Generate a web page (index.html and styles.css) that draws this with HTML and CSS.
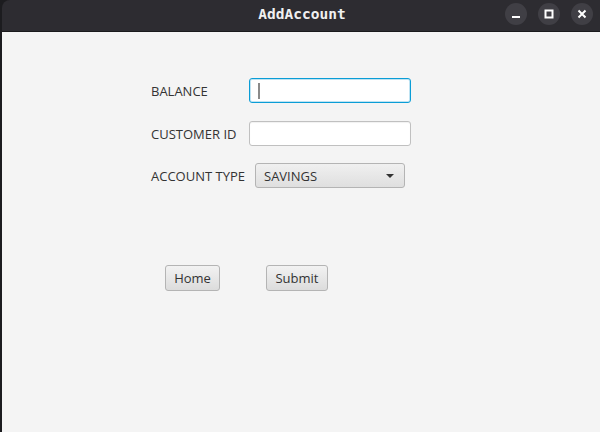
FILE: index.html
```html
<!DOCTYPE html>
<html>
<head>
<meta charset="utf-8">
<link rel="stylesheet" href="styles.css">
</head>
<body>
<div class="window">
  <div class="titlebar">
    <div class="title">AddAccount</div>
    <div class="controls">
      <div class="ctl"><svg width="10" height="10" viewBox="0 0 10 10"><rect x="1" y="7" width="8" height="2" fill="#fff"/></svg></div>
      <div class="ctl"><svg width="10" height="10" viewBox="0 0 10 10"><rect x="1.5" y="1.5" width="7" height="7" fill="none" stroke="#fff" stroke-width="2"/></svg></div>
      <div class="ctl"><svg width="10" height="10" viewBox="0 0 10 10"><path d="M1.5 1.5 L8.5 8.5 M8.5 1.5 L1.5 8.5" stroke="#fff" stroke-width="2"/></svg></div>
    </div>
  </div>
  <div class="content">
    <div class="form">
      <label class="lbl">BALANCE</label>
      <div class="field focused"><span class="caret"></span></div>
      <label class="lbl">CUSTOMER ID</label>
      <div class="field"></div>
      <label class="lbl up">ACCOUNT TYPE</label>
      <div class="combo"><span>SAVINGS</span><span class="arrow"></span></div>
    </div>
    <div class="actions">
      <button class="btn home">Home</button>
      <button class="btn submit">Submit</button>
    </div>
  </div>
</div>
</body>
</html>
```
FILE: styles.css
```css
html, body {
  margin: 0;
  padding: 0;
  height: 100%;
  background: #1c1c1f;
}
.window {
  margin-left: 2px;
  height: 432px;
  display: flex;
  flex-direction: column;
}
.titlebar {
  height: 31px;
  background: #2d2c31;
  border-radius: 8px 0 0 0;
  border-bottom: 1px solid #1a1a1c;
  position: relative;
  display: flex;
  align-items: center;
  justify-content: center;
}
.title {
  font-family: "DejaVu Sans Mono", monospace;
  font-weight: bold;
  font-size: 14.5px;
  color: #f0f0f0;
  margin-top: -4px;
  margin-left: 2px;
}
.controls {
  position: absolute;
  right: 7px;
  top: 3px;
  display: flex;
  gap: 11px;
}
.ctl {
  width: 22px;
  height: 22px;
  border-radius: 50%;
  background: #403f45;
  display: flex;
  align-items: center;
  justify-content: center;
}
.content {
  flex: 1;
  background: #f4f4f4;
  font-family: "Open Sans", sans-serif;
  font-size: 13px;
  color: #333;
  padding-top: 46px;
}
.form {
  display: grid;
  grid-template-columns: 98px 162px;
  grid-auto-rows: 25px;
  row-gap: 18px;
  margin-left: 149px;
  align-items: center;
}
.lbl {
  color: #333;
  margin-top: 1px;
}
.lbl.up {
  margin-top: 0;
  margin-bottom: 1px;
}
.field {
  height: 25px;
  box-sizing: border-box;
  border: 1px solid #c0c0c0;
  border-radius: 3px;
  background: #fff;
  box-shadow: inset 0 1px 1px rgba(0,0,0,0.06);
  position: relative;
}
.field.focused {
  border: 1px solid #0a9dd6;
  box-shadow: inset 0 0 0 1px #bfe3f2;
}
.caret {
  position: absolute;
  left: 8px;
  top: 4px;
  width: 2px;
  height: 16px;
  background: #8a8a8a;
}
.combo {
  align-self: start;
  margin-top: -1px;
  margin-left: 6px;
  width: 150px;
  height: 25px;
  box-sizing: border-box;
  border: 1px solid #b4b4b4;
  border-radius: 3px;
  background: linear-gradient(#f0f0f0, #dfdfdf);
  display: flex;
  align-items: center;
  justify-content: space-between;
  padding: 0 10px 0 8px;
}
.arrow {
  width: 0;
  height: 0;
  border-left: 4px solid transparent;
  border-right: 4px solid transparent;
  border-top: 4px solid #333;
}
.actions {
  display: flex;
  gap: 46px;
  margin-left: 163px;
  margin-top: 76px;
}
.btn {
  height: 26px;
  box-sizing: border-box;
  border: 1px solid #b4b4b4;
  border-radius: 3px;
  background: linear-gradient(#f2f2f2, #dcdcdc);
  font-family: "Open Sans", sans-serif;
  font-size: 13px;
  color: #333;
  padding: 0;
}
.home { width: 55px; }
.submit { width: 62px; }
```
